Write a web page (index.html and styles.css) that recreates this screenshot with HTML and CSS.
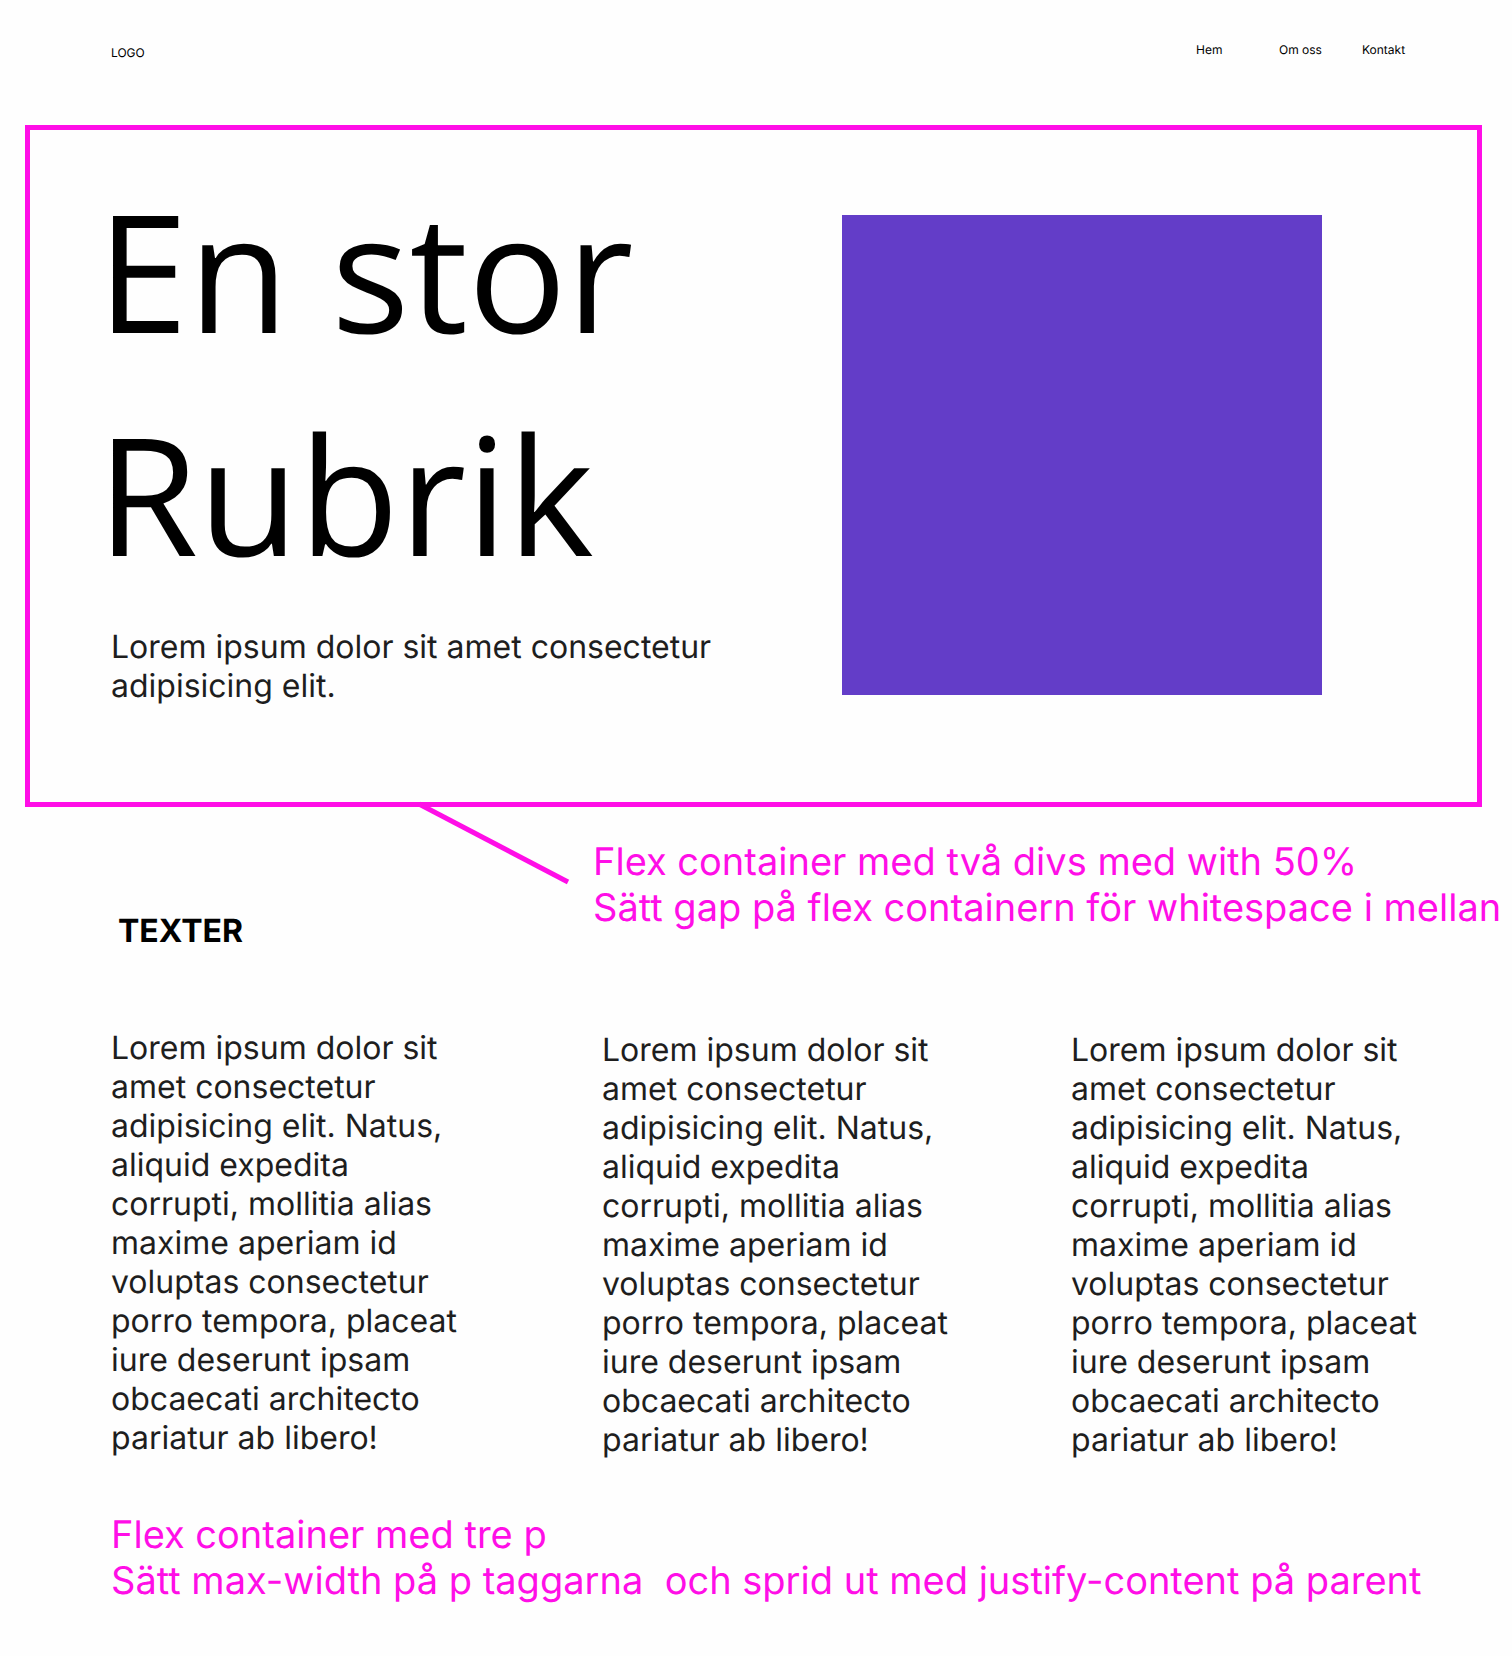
FILE: index.html
```html
<!DOCTYPE html>
<html lang="sv">
<head>
  <meta charset="utf-8">
  <meta name="viewport" content="width=device-width, initial-scale=1">
  <title>En stor Rubrik</title>
  <link rel="stylesheet" href="styles.css">
</head>
<body>
  <header class="header">
    <a class="logo" href="#">LOGO</a>
    <nav class="nav">
      <a href="#">Hem</a>
      <a href="#">Om oss</a>
      <a href="#">Kontakt</a>
    </nav>
  </header>
  <main>
    <section class="hero">
      <div class="hero-text">
        <h1>En stor Rubrik</h1>
        <p>Lorem ipsum dolor sit amet consectetur adipisicing elit.</p>
      </div>
      <div class="hero-media"><div class="square"></div></div>
    </section>
    <div class="intro">
      <h2>TEXTER</h2>
      <svg class="pointer" width="148" height="78" viewBox="0 0 148 78" aria-hidden="true">
        <line x1="-1" y1="-3" x2="148" y2="75" stroke="#ff0ee7" stroke-width="5"/>
      </svg>
      <p class="note">Flex container med två divs med with 50%
Sätt gap på flex containern för whitespace i mellan</p>
    </div>
    <section class="columns">
      <p>Lorem ipsum dolor sit amet consectetur adipisicing elit. Natus, aliquid expedita corrupti, mollitia alias maxime aperiam id voluptas consectetur porro tempora, placeat iure deserunt ipsam obcaecati architecto pariatur ab libero!</p>
      <p>Lorem ipsum dolor sit amet consectetur adipisicing elit. Natus, aliquid expedita corrupti, mollitia alias maxime aperiam id voluptas consectetur porro tempora, placeat iure deserunt ipsam obcaecati architecto pariatur ab libero!</p>
      <p>Lorem ipsum dolor sit amet consectetur adipisicing elit. Natus, aliquid expedita corrupti, mollitia alias maxime aperiam id voluptas consectetur porro tempora, placeat iure deserunt ipsam obcaecati architecto pariatur ab libero!</p>
    </section>
    <p class="note note-bottom">Flex container med tre p
Sätt max-width på p taggarna  och sprid ut med justify-content på parent</p>
  </main>
</body>
</html>
```
FILE: styles.css
```css
* {
  box-sizing: border-box;
}

body {
  margin: 0;
  background: #fefefe;
  color: #000;
  font-family: Inter, sans-serif;
  text-rendering: geometricPrecision;
}

h1,
h2,
p {
  margin: 0;
}

p {
  color: #1e1e1e;
  font-size: 32px;
  line-height: 39px;
}

.header {
  display: flex;
  justify-content: space-between;
  align-items: flex-start;
  padding: 42px 67px 65px 111px;
  font-size: 12px;
  line-height: 15px;
}

.header a {
  color: inherit;
  text-decoration: none;
}

.logo {
  padding-top: 3px;
}

.nav {
  display: grid;
  grid-template-columns: repeat(3, 83px);
}

.hero {
  display: grid;
  grid-template-columns: 1fr 1fr;
  gap: 48px;
  margin: 0 30px 0 25px;
  padding: 29px 82px 97px 67px;
  border: 5px solid #ff0ee7;
}

.hero-text p {
  padding-left: 14px;
}

.hero-media {
  padding: 56px 0 0 72px;
}

.square {
  max-width: 480px;
  aspect-ratio: 1;
  background: #633dc8;
}

h1 {
  margin-bottom: 22px;
  font-family: "Open Sans", sans-serif;
  font-size: 164px;
  font-weight: 400;
  line-height: 223px;
}

.intro {
  display: flex;
  align-items: flex-start;
  padding-left: 118px;
}

h2 {
  flex: 0 0 302px;
  padding-top: 104px;
  font-size: 32px;
  font-weight: 700;
  line-height: 39px;
}

.pointer {
  flex: none;
  overflow: visible;
}

.note {
  color: #ff0ee7;
  font-size: 38px;
  line-height: 46px;
  white-space: pre;
}

.intro .note {
  padding: 32px 0 0 25px;
}

.columns {
  display: grid;
  grid-template-columns: 491fr 469fr 352fr;
  padding: 78px 89px 0 111px;
}

.columns p {
  max-width: 352px;
}

.columns p + p {
  padding-top: 2px;
}

.note-bottom {
  padding: 53px 0 52px 111px;
}
```
